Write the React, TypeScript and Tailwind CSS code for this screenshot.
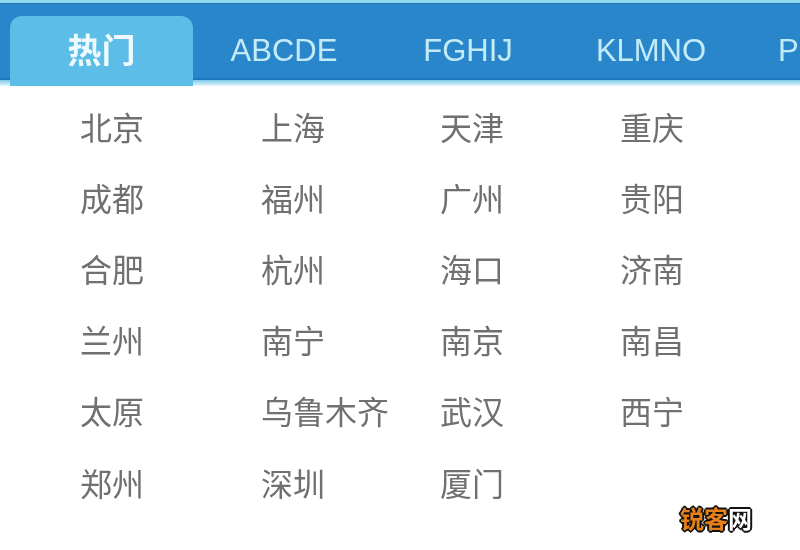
const tabs = [
  { label: "ABCDE", w: "w-[182px] text-center" },
  { label: "FGHIJ", w: "w-[186px] text-center" },
  { label: "KLMNO", w: "w-[180px] text-center" },
  { label: "P", w: "w-[22px] ml-[37px] text-left" },
];

const cities = [
  ["北京", "上海", "天津", "重庆"],
  ["成都", "福州", "广州", "贵阳"],
  ["合肥", "杭州", "海口", "济南"],
  ["兰州", "南宁", "南京", "南昌"],
  ["太原", "乌鲁木齐", "武汉", "西宁"],
  ["郑州", "深圳", "厦门", ""],
];

export default function App() {
  return (
    <div className="relative w-[800px] h-[550px] overflow-hidden bg-white font-['Noto_Sans_CJK_SC','Liberation_Sans',sans-serif] blur-[0.5px]">
      <div className="h-[3px] bg-[#8fdcec]" />
      <div className="h-[83px] flex flex-col">
        <div className="h-[77px] bg-[#2a86cb] flex pl-[10px] pt-[12px] border-t-[1px] border-t-[#2373b3] border-b-[2px] border-b-[#1f78bd]">
          <div className="relative w-[183px] h-[70px] shrink-0 rounded-t-[12px] bg-[#5cbde6] flex items-start justify-center pt-[11px] text-[34px] leading-[44px] font-bold text-[#eefafd]">
            热门
          </div>
          {tabs.map((t) => (
            <div
              key={t.label}
              className={`${t.w} shrink-0 pt-[13px] text-[31px] leading-[44px] text-[#c2ebf7] font-['Liberation_Sans',sans-serif]`}
            >
              {t.label}
            </div>
          ))}
        </div>
        <div className="h-[6px] bg-gradient-to-b from-[#7cc9e6] to-[#e6f6fb]" />
      </div>
      <div className="pt-[4px] pl-[80px]">
        {cities.map((row, i) => (
          <div key={i} className="grid grid-cols-[181px_179px_180px_180px] h-[71.2px] items-center">
            {row.map((c, j) => (
              <span key={j} className="text-[32px] leading-[40px] text-[#707070] whitespace-nowrap">
                {c}
              </span>
            ))}
          </div>
        ))}
      </div>
      <div className="absolute left-[680px] top-[502px] text-[24px] leading-[32px] font-bold [text-shadow:-2px_0_0_#111,2px_0_0_#111,0_-2px_0_#111,0_2px_0_#111,-1px_-1px_0_#111,1px_1px_0_#111,-1px_1px_0_#111,1px_-1px_0_#111]">
        <span className="text-[#e8801a]">锐客</span>
        <span className="text-white">网</span>
      </div>
    </div>
  );
}
